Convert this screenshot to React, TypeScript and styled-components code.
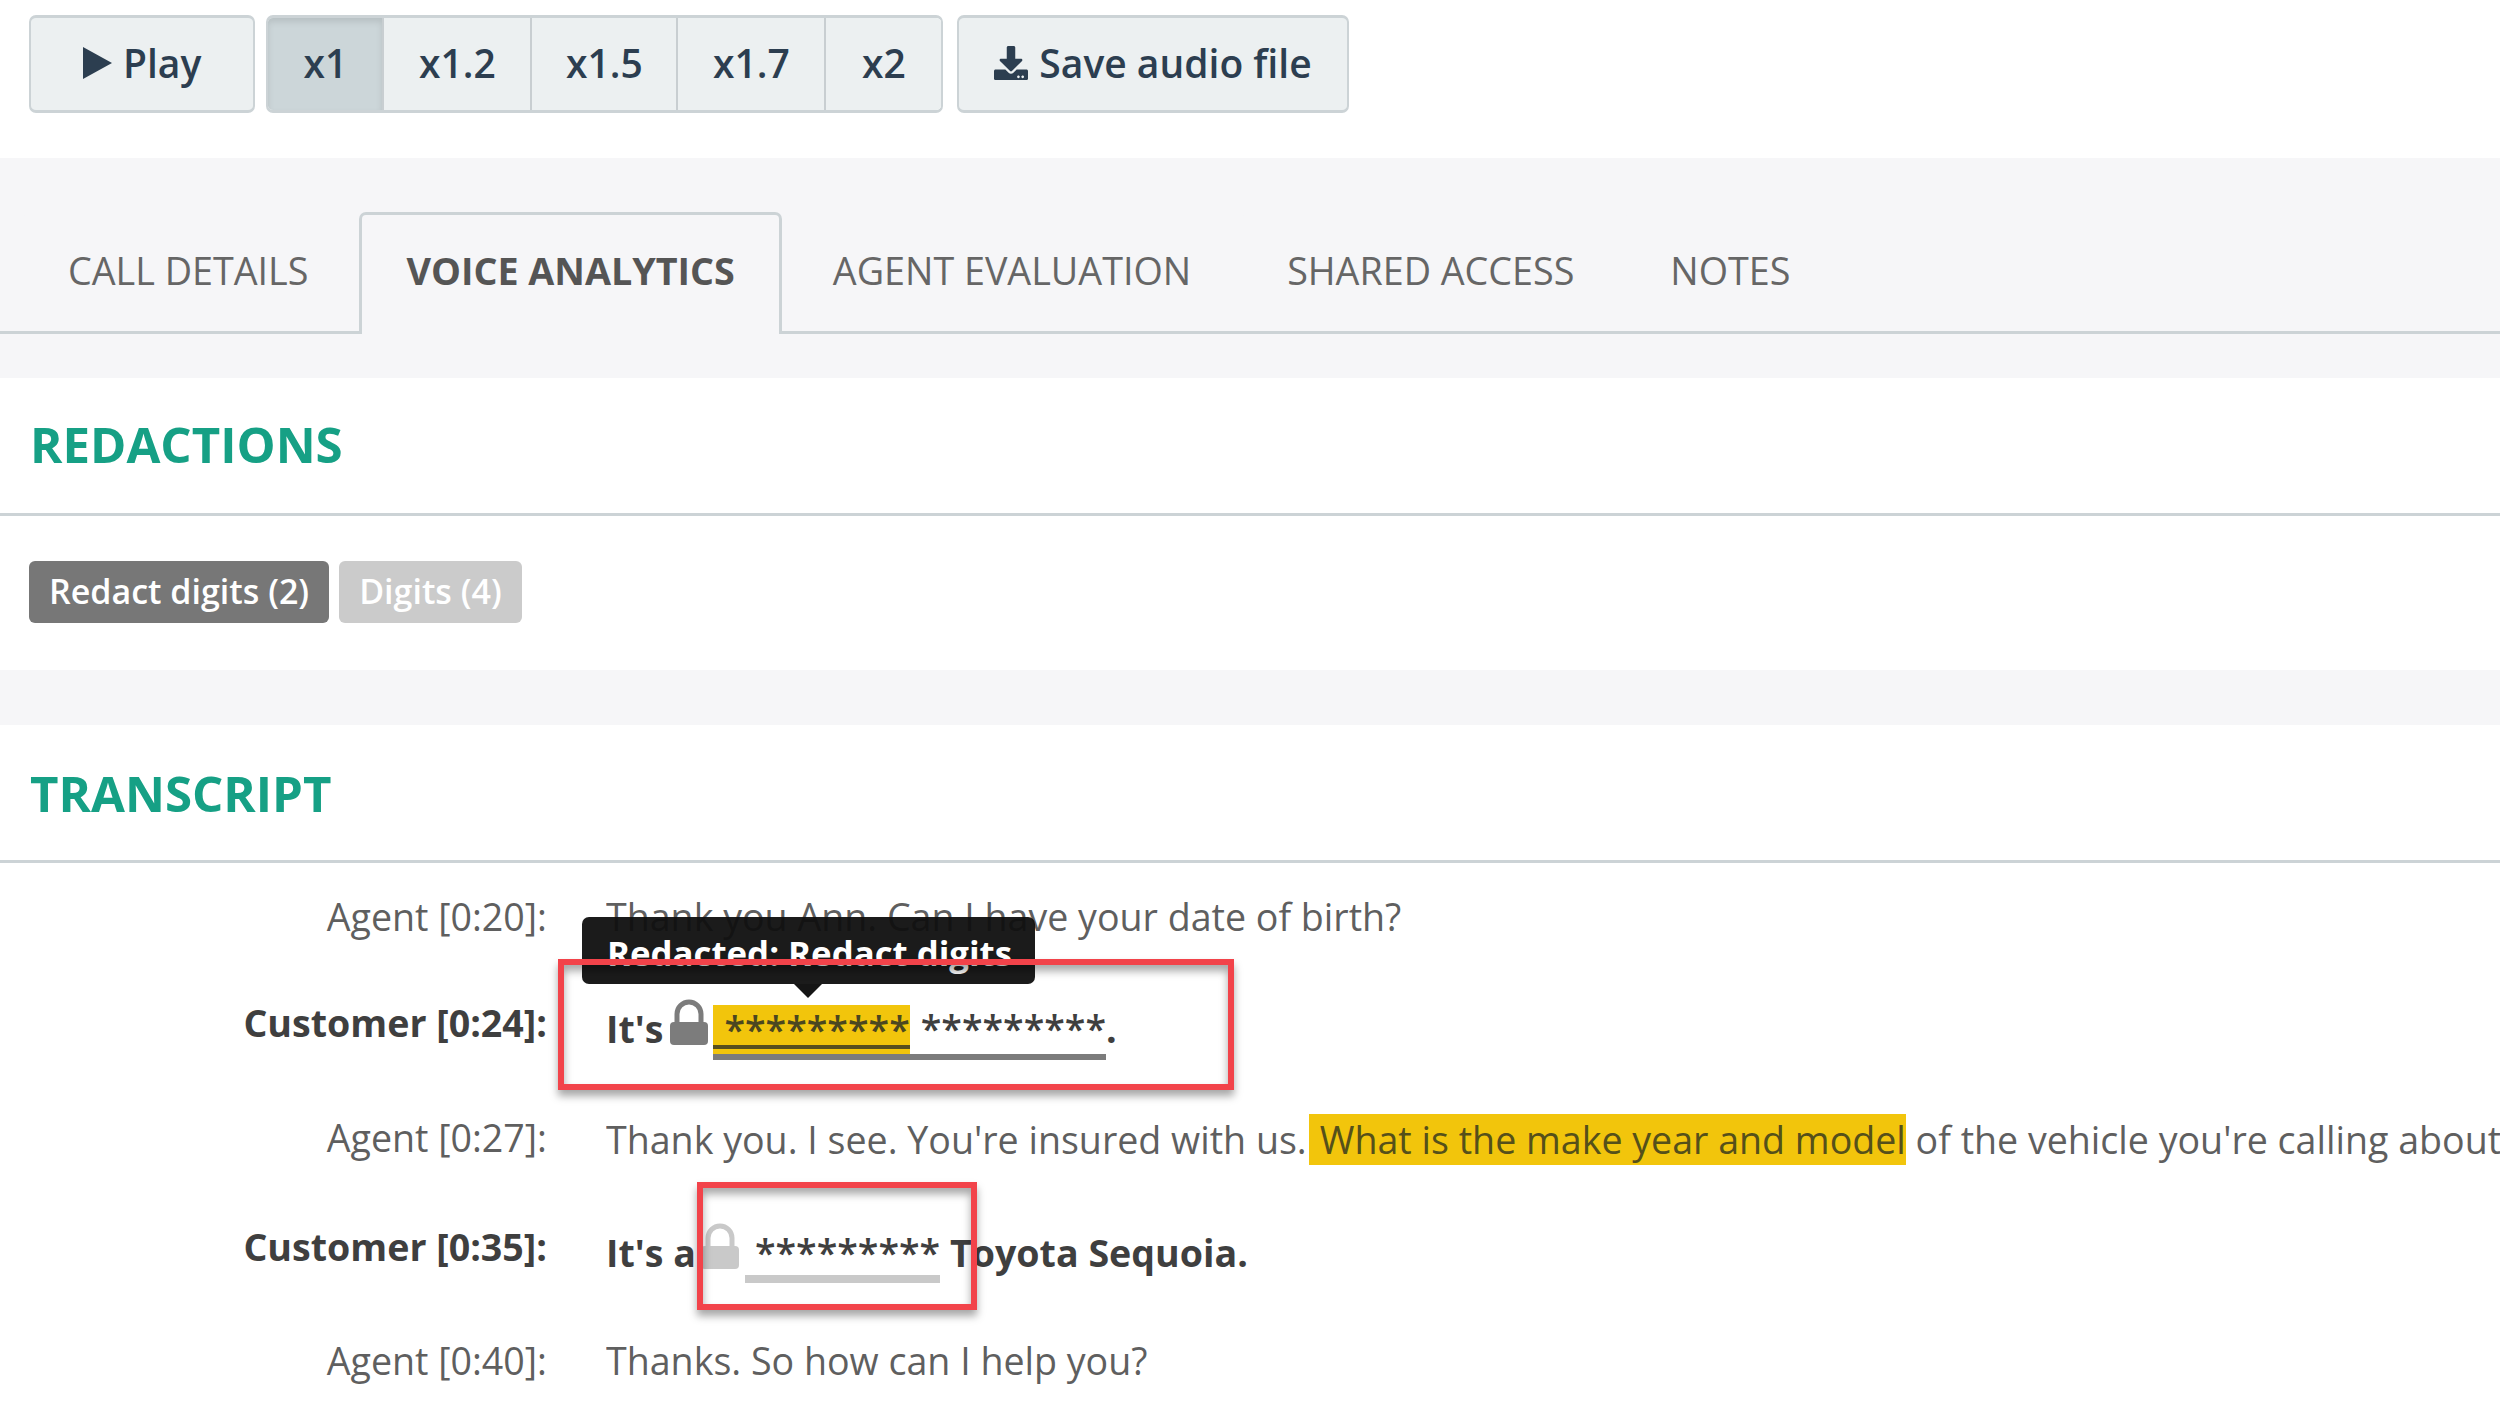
import React from "react";
import styled, { createGlobalStyle } from "styled-components";
import { FaDownload } from "react-icons/fa";

const Global = createGlobalStyle`
  html, body { margin: 0; padding: 0; background: #fff; }
  body { width: 2500px; height: 1406px; overflow: hidden; font-family: "Open Sans", "Liberation Sans", sans-serif; color: #555; }
`;

const Page = styled.div`
  width: 2500px;
  height: 1406px;
  overflow: hidden;
`;

const Toolbar = styled.div`
  display: flex;
  gap: 11px;
  height: 158px;
  box-sizing: border-box;
  padding: 15px 29px 0;
`;

const Button = styled.div<{ $pad: number; $left?: number }>`
  height: 98px;
  box-sizing: border-box;
  display: flex;
  align-items: center;
  gap: 11px;
  padding: 0 ${(p) => p.$pad}px 3px;
  margin-left: ${(p) => p.$left ?? 0}px;
  background: #ecf0f1;
  border: 2px solid #ccd3d6;
  border-top-width: 3px;
  border-bottom-width: 3px;
  border-radius: 7px;
  font-size: 39px;
  font-weight: 600;
  color: #2c3e50;
`;

const PlayIcon = styled.svg`
  width: 29px;
  height: 32px;
  fill: #2c3e50;
`;

const SpeedGroup = styled.div`
  display: flex;
  height: 98px;
  box-sizing: border-box;
  border: 2px solid #ccd3d6;
  border-top-width: 3px;
  border-bottom-width: 3px;
  border-radius: 7px;
  overflow: hidden;
`;

const Speed = styled.div<{ $width: number; $active?: boolean }>`
  width: ${(p) => p.$width}px;
  box-sizing: border-box;
  display: flex;
  align-items: center;
  justify-content: center;
  padding-bottom: 3px;
  background: ${(p) => (p.$active ? "#ccd6d9" : "#ecf0f1")};
  box-shadow: ${(p) => (p.$active ? "inset 0 4px 6px rgba(0, 0, 0, 0.1)" : "none")};
  border-right: 2px solid #c8ced1;
  font-size: 39px;
  font-weight: 600;
  color: #2c3e50;
  &:last-child { border-right: 0; }
`;

const TabBand = styled.div`
  height: 220px;
  box-sizing: border-box;
  padding-top: 54px;
  background: #f6f6f8;
`;

const TabRow = styled.div`
  display: flex;
  gap: 6px;
  height: 122px;
  box-sizing: border-box;
  padding-left: 23px;
  border-bottom: 3px solid #ccd3d6;
`;

const Tab = styled.div<{ $active?: boolean }>`
  height: ${(p) => (p.$active ? "122px" : "119px")};
  box-sizing: border-box;
  display: flex;
  align-items: center;
  padding: 0 ${(p) => (p.$active ? "44px" : "45px")} ${(p) => (p.$active ? "8px" : "3px")};
  font-size: 37.7px;
  font-weight: ${(p) => (p.$active ? 700 : 400)};
  color: ${(p) => (p.$active ? "#555" : "#666")};
  white-space: nowrap;
  background: #f6f6f8;
  border: ${(p) => (p.$active ? "3px solid #ccd3d6" : "0")};
  border-bottom: 0;
  border-radius: 7px 7px 0 0;
`;

const SectionHeader = styled.div<{ $lift?: number }>`
  height: 135px;
  box-sizing: content-box;
  display: flex;
  align-items: center;
  padding-left: 30px;
  border-bottom: 3px solid #ccd3d6;
  & > h2 { margin-bottom: ${(p) => p.$lift ?? 0}px; }
`;

const Heading = styled.h2`
  margin: 0;
  font-size: 49.2px;
  font-weight: 700;
  color: #16a085;
`;

const BadgeRow = styled.div`
  display: flex;
  gap: 10px;
  height: 154px;
  box-sizing: border-box;
  padding: 45px 29px 0;
`;

const Badge = styled.div<{ $muted?: boolean }>`
  height: 62px;
  box-sizing: border-box;
  display: flex;
  align-items: center;
  padding: 0 20px 2px;
  border-radius: 6px;
  background: ${(p) => (p.$muted ? "#cbcbcb" : "#777")};
  color: #fff;
  font-size: 34px;
  font-weight: 600;
  white-space: nowrap;
`;

const Spacer = styled.div`
  height: 55px;
  background: #f6f6f8;
`;

const Transcript = styled.div`
  padding-top: 30px;
`;

const Row = styled.div<{ $height: number }>`
  position: relative;
  height: ${(p) => p.$height}px;
  display: grid;
  grid-template-columns: 547px 1fr;
  column-gap: 59px;
  font-size: 37.6px;
  line-height: 48px;
  white-space: nowrap;
`;

const Speaker = styled.div<{ $customer?: boolean }>`
  text-align: right;
  font-weight: ${(p) => (p.$customer ? 700 : 400)};
  color: ${(p) => (p.$customer ? "#3f3f3f" : "#5f5f5f")};
`;

const Speech = styled.div<{ $customer?: boolean }>`
  overflow: hidden;
  height: 100px;
  font-weight: ${(p) => (p.$customer ? 700 : 400)};
  color: ${(p) => (p.$customer ? "#3f3f3f" : "#5f5f5f")};
`;

const Highlight = styled.span`
  display: inline-block;
  background: #f2c50c;
  line-height: 51px;
  color: #55501a;
  padding-left: 11px;
  margin-left: 2px;
`;

const LockIcon = styled.svg<{ $muted?: boolean }>`
  width: 38px;
  height: 46px;
  vertical-align: -2px;
  margin: 0 ${(p) => (p.$muted ? 16 : 5)}px 0 ${(p) => (p.$muted ? 5 : 7)}px;
  color: ${(p) => (p.$muted ? "#c9c9c9" : "#7c7c7c")};
`;

const Redacted = styled.span<{ $muted?: boolean }>`
  position: relative;
  display: inline-block;
  font-weight: 600;
  &::after {
    content: "";
    position: absolute;
    left: ${(p) => (p.$muted ? -10 : 0)}px;
    right: 0;
    bottom: ${(p) => (p.$muted ? -6 : -2)}px;
    height: ${(p) => (p.$muted ? 8 : 6)}px;
    background: ${(p) => (p.$muted ? "#c9c9c9" : "#7c7c7c")};
  }
`;

const Marked = styled.span`
  display: inline-block;
  height: 53px;
  line-height: 50px;
  box-sizing: border-box;
  vertical-align: top;
  background: linear-gradient(#f2c50c 40px, #574f1e 40px, #574f1e 44px, #f2c50c 44px);
  padding-left: 11px;
  margin-right: 11px;
  color: #4b4720;
`;

const Tooltip = styled.div`
  position: absolute;
  z-index: 1;
  left: 582px;
  top: -82px;
  width: 453px;
  height: 67px;
  box-sizing: border-box;
  padding: 12px 25px 0;
  background: rgba(15, 15, 15, 0.95);
  border-radius: 7px;
  color: #fff;
  font-weight: 700;
  font-size: 34.8px;
  line-height: 48px;
  &::after {
    content: "";
    position: absolute;
    left: 212px;
    top: 67px;
    border: 14px solid transparent;
    border-top-color: #151515;
    border-bottom: 0;
  }
`;

const Callout = styled.div<{ $left: number; $top: number; $width: number; $height: number }>`
  position: absolute;
  z-index: 2;
  left: ${(p) => p.$left}px;
  top: ${(p) => p.$top}px;
  width: ${(p) => p.$width}px;
  height: ${(p) => p.$height}px;
  box-sizing: border-box;
  border: 6px solid #f2434a;
  box-shadow: 0 6px 8px rgba(0, 0, 0, 0.35), inset 0 6px 8px rgba(0, 0, 0, 0.35);
`;

const Lock = ({ muted }: { muted?: boolean }) => (
  <LockIcon $muted={muted} viewBox="0 0 38 46">
    <path d="M7 26V15a12 12 0 0 1 24 0v11" fill="none" stroke="currentColor" strokeWidth="5" />
    <rect x="0" y="23" width="38" height="23" rx="4" fill="currentColor" />
  </LockIcon>
);

const speeds = [
  { label: "x1", width: 116, active: true },
  { label: "x1.2", width: 148 },
  { label: "x1.5", width: 146 },
  { label: "x1.7", width: 148 },
  { label: "x2", width: 115 },
];

const tabs = ["CALL DETAILS", "VOICE ANALYTICS", "AGENT EVALUATION", "SHARED ACCESS", "NOTES"];

export default function App() {
  return (
    <Page>
      <Global />
      <Toolbar>
        <Button $pad={52}>
          <PlayIcon viewBox="0 0 29 32"><path d="M0 0L29 16L0 32Z" /></PlayIcon>
          Play
        </Button>
        <SpeedGroup>
          {speeds.map((s) => (
            <Speed key={s.label} $width={s.width} $active={s.active}>{s.label}</Speed>
          ))}
        </SpeedGroup>
        <Button $pad={35} $left={3}>
          <FaDownload size={34} />
          Save audio file
        </Button>
      </Toolbar>
      <TabBand>
        <TabRow>
          {tabs.map((t, i) => (
            <Tab key={t} $active={i === 1}>{t}</Tab>
          ))}
        </TabRow>
      </TabBand>
      <SectionHeader $lift={4}><Heading>REDACTIONS</Heading></SectionHeader>
      <BadgeRow>
        <Badge>Redact digits (2)</Badge>
        <Badge $muted>Digits (4)</Badge>
      </BadgeRow>
      <Spacer />
      <SectionHeader><Heading>TRANSCRIPT</Heading></SectionHeader>
      <Transcript>
        <Row $height={106}>
          <Speaker>Agent [0:20]:</Speaker>
          <Speech>Thank you Ann. Can I have your date of birth?</Speech>
        </Row>
        <Row $height={115}>
          <Tooltip>Redacted: Redact digits</Tooltip>
          <Callout $left={558} $top={-40} $width={676} $height={131} />
          <Speaker $customer>Customer [0:24]:</Speaker>
          <Speech $customer>
            It's<Lock />
            <Redacted><Marked>*********</Marked>*********</Redacted>.
          </Speech>
        </Row>
        <Row $height={109}>
          <Speaker>Agent [0:27]:</Speaker>
          <Speech>
            Thank you. I see. You're insured with us.<Highlight>What is the make year and model</Highlight> of the vehicle you're calling about?
          </Speech>
        </Row>
        <Row $height={114}>
          <Callout $left={697} $top={-41} $width={280} $height={128} />
          <Speaker $customer>Customer [0:35]:</Speaker>
          <Speech $customer>
            It's a<Lock muted />
            <Redacted $muted>*********</Redacted> Toyota Sequoia.
          </Speech>
        </Row>
        <Row $height={70}>
          <Speaker>Agent [0:40]:</Speaker>
          <Speech>Thanks. So how can I help you?</Speech>
        </Row>
      </Transcript>
    </Page>
  );
}
